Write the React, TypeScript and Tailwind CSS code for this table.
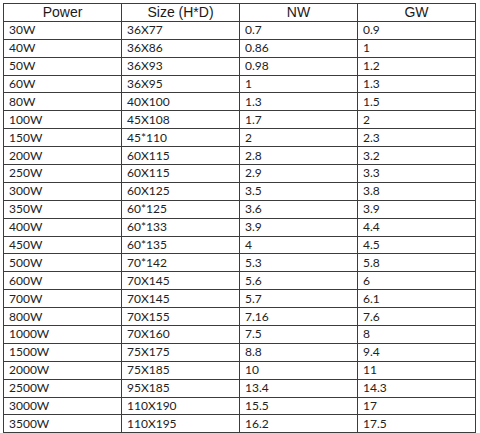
const rows: [string, string, string, string][] = [
  ["30W", "36X77", "0.7", "0.9"],
  ["40W", "36X86", "0.86", "1"],
  ["50W", "36X93", "0.98", "1.2"],
  ["60W", "36X95", "1", "1.3"],
  ["80W", "40X100", "1.3", "1.5"],
  ["100W", "45X108", "1.7", "2"],
  ["150W", "45*110", "2", "2.3"],
  ["200W", "60X115", "2.8", "3.2"],
  ["250W", "60X115", "2.9", "3.3"],
  ["300W", "60X125", "3.5", "3.8"],
  ["350W", "60*125", "3.6", "3.9"],
  ["400W", "60*133", "3.9", "4.4"],
  ["450W", "60*135", "4", "4.5"],
  ["500W", "70*142", "5.3", "5.8"],
  ["600W", "70X145", "5.6", "6"],
  ["700W", "70X145", "5.7", "6.1"],
  ["800W", "70X155", "7.16", "7.6"],
  ["1000W", "70X160", "7.5", "8"],
  ["1500W", "75X175", "8.8", "9.4"],
  ["2000W", "75X185", "10", "11"],
  ["2500W", "95X185", "13.4", "14.3"],
  ["3000W", "110X190", "15.5", "17"],
  ["3500W", "110X195", "16.2", "17.5"],
];

const headers = ["Power", "Size (H*D)", "NW", "GW"];

export default function App() {
  return (
    <div className="h-[433px] w-[480px] bg-white pl-[3px] pt-[3px]">
      <table className="w-[473px] table-fixed border-collapse border border-[#3c3c3c]">
        <thead>
          <tr className="h-[17.9px]">
            {headers.map((h) => (
              <th
                key={h}
                className="border border-[#3c3c3c] p-0 text-center align-middle text-[14px] font-normal leading-none text-[#1a1a1a] [font-family:'Liberation_Sans',Arial,sans-serif]"
              >
                {h}
              </th>
            ))}
          </tr>
        </thead>
        <tbody>
          {rows.map((r) => (
            <tr key={r[0]} className="h-[17.9px]">
              {r.map((c, i) => (
                <td
                  key={i}
                  className="border border-[#3c3c3c] py-0 pl-[5px] text-left align-middle text-[12px] leading-none text-[#222] [font-family:Lato,'Open_Sans',sans-serif]"
                >
                  {c}
                </td>
              ))}
            </tr>
          ))}
        </tbody>
      </table>
    </div>
  );
}
